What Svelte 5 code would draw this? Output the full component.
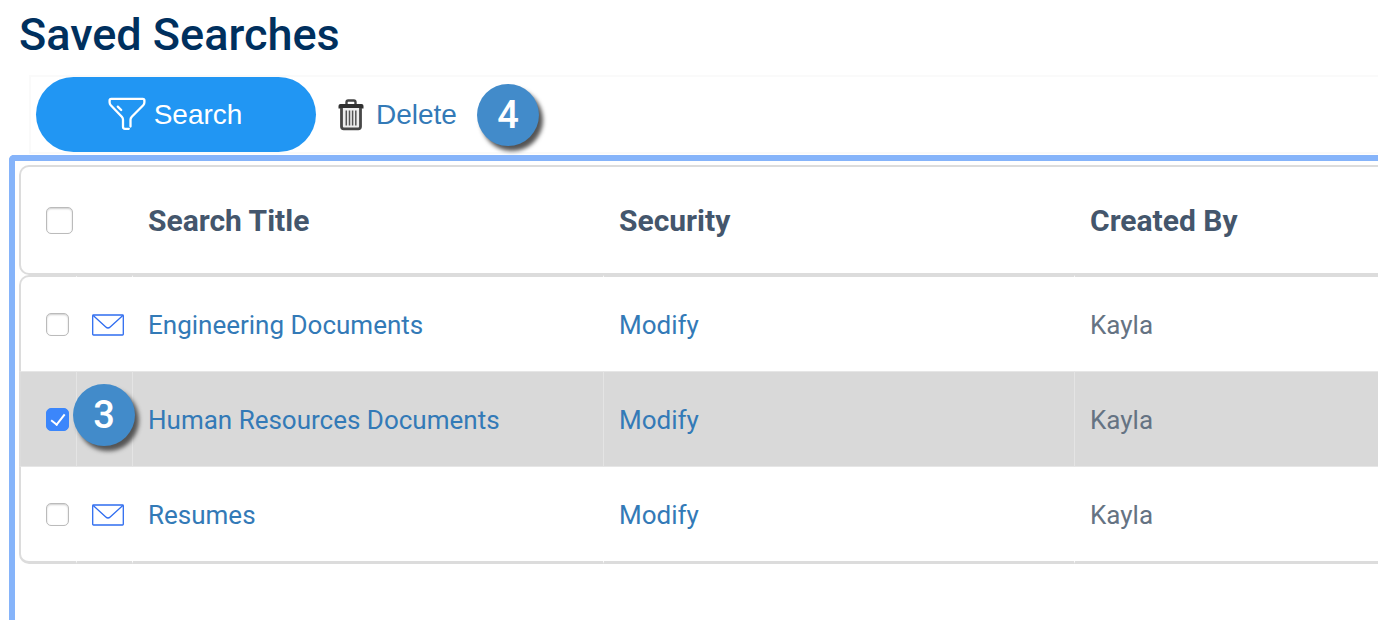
<script lang="ts">
  interface SavedSearch {
    id: number;
    title: string;
    createdBy: string;
    selected: boolean;
    step?: number;
  }

  let searches = $state<SavedSearch[]>([
    { id: 1, title: "Engineering Documents", createdBy: "Kayla", selected: false },
    { id: 2, title: "Human Resources Documents", createdBy: "Kayla", selected: true, step: 3 },
    { id: 3, title: "Resumes", createdBy: "Kayla", selected: false },
  ]);

  let allSelected = $derived(searches.length > 0 && searches.every((s) => s.selected));

  function toggleAll(event: Event) {
    const checked = (event.target as HTMLInputElement).checked;
    for (const search of searches) search.selected = checked;
  }

  function deleteSelected() {
    searches = searches.filter((s) => !s.selected);
  }
</script>

<main>
  <h1>Saved Searches</h1>

  <div class="toolbar">
    <button class="search" type="button">
      <svg width="38" height="36" viewBox="0 0 38 36" fill="none" stroke="#fff" stroke-width="2.3" stroke-linecap="round" stroke-linejoin="round">
        <path d="M22.5 29.5V22.8C22.5 21.6 23 20.7 23.8 19.8L35.2 8.2C36 7.3 36.4 6.4 36.4 5.2V3.4C36.4 2.4 35.8 1.8 34.8 1.8H3.2C2.2 1.8 1.6 2.4 1.6 3.4V5.2C1.6 6.4 2 7.3 2.8 8.2L13.8 19.8C14.6 20.7 15 21.6 15 22.8V29.8C15 31.2 15.7 31.8 17 31.8H20.8" />
        <path d="M9.8 9.6L13.2 13" />
      </svg>
      <span>Search</span>
    </button>
    <button class="delete" type="button" onclick={deleteSelected}>
      <svg width="26" height="32" viewBox="0 0 26 32" fill="none">
        <path d="M8.5 5V3.2Q8.5 1.5 10.2 1.5H15.8Q17.5 1.5 17.5 3.2V5" stroke="#444" stroke-width="2.4" />
        <path d="M2.5 5H23.5Q25.5 5 25.5 7V9.5H.5V7Q.5 5 2.5 5Z" fill="#303030" />
        <path d="M3.5 9V27.5Q3.5 29.8 5.8 29.8H20.2Q22.5 29.8 22.5 27.5V9" fill="#eee" stroke="#484848" stroke-width="2.8" />
        <path d="M8.3 11.5V26.5M11.5 11.5V26.5M14.6 11.5V26.5M17.8 11.5V26.5" stroke="#555" stroke-width="1.5" />
      </svg>
      <span>Delete</span>
    </button>
    <span class="badge">4</span>
  </div>

  <section class="panel">
    <table>
      <colgroup>
        <col class="check-col" />
        <col class="mail-col" />
        <col />
        <col />
        <col />
      </colgroup>
      <thead>
        <tr>
          <th class="check">
            <input type="checkbox" aria-label="Select all" checked={allSelected} onchange={toggleAll} />
          </th>
          <th></th>
          <th>Search Title</th>
          <th>Security</th>
          <th>Created By</th>
        </tr>
      </thead>
      <tbody>
        {#each searches as search (search.id)}
          <tr class:selected={search.selected}>
            <td class="check">
              <input type="checkbox" aria-label={search.title} bind:checked={search.selected} />
            </td>
            <td class="mail">
              <svg width="32" height="22" viewBox="0 0 32 22" fill="none" stroke="#2f6df0" stroke-width="1.3" stroke-linejoin="round">
                <rect x=".7" y="1" width="30.6" height="20" rx=".8" />
                <path d="M1.2 1.5L13.8 13Q16 15 18.2 13L30.8 1.5" />
              </svg>
              {#if search.step}
                <span class="badge over">{search.step}</span>
              {/if}
            </td>
            <td><a href="#open">{search.title}</a></td>
            <td><a href="#modify">Modify</a></td>
            <td>{search.createdBy}</td>
          </tr>
        {/each}
      </tbody>
    </table>
  </section>
</main>

<style>
  :global(body) {
    background: #fff;
  }

  main {
    display: flex;
    flex-direction: column;
    min-height: 100vh;
    box-sizing: border-box;
    padding: 8px 0 0 9px;
    overflow: hidden;
    font-family: Roboto, sans-serif;
  }

  h1 {
    margin: 0 0 13px 10px;
    font-size: 45px;
    line-height: 54px;
    font-weight: 500;
    color: #00305e;
  }

  .toolbar {
    display: flex;
    align-items: center;
    margin: 0 0 1px 20px;
    padding-left: 5px;
    border: 2px solid #fafafa;
    border-right: 0;
  }

  button {
    display: flex;
    align-items: center;
    border: 0;
    padding: 0;
    font-family: "Liberation Sans", Arial, sans-serif;
    font-size: 28px;
    line-height: 32px;
    cursor: pointer;
  }

  .search {
    justify-content: center;
    gap: 8px;
    width: 280px;
    height: 75px;
    padding-right: 2px;
    border-radius: 38px;
    background: #2196f3;
    color: #fff;
  }

  .delete {
    gap: 12px;
    margin: 0 20px 0 22px;
    background: none;
    color: #337ab7;
  }

  .badge {
    width: 62px;
    height: 62px;
    border-radius: 50%;
    background: #428bca;
    box-shadow: 4px 5px 4px #555;
    color: #fff;
    font-size: 38px;
    line-height: 62px;
    font-weight: 500;
    text-align: center;
  }

  .badge.over {
    position: absolute;
    top: 12px;
    left: -4px;
    z-index: 1;
  }

  .panel {
    flex: 1;
    padding: 4px 0 0 4px;
    border: solid #86b4fa;
    border-width: 6px 0 0 6px;
    border-top-left-radius: 5px;
    overflow: hidden;
  }

  /* wider than the panel, the last column runs off the right side */
  table {
    width: calc(100% + 168px);
    table-layout: fixed;
    border-collapse: separate;
    border-spacing: 0;
  }

  .check-col {
    width: 58px;
  }

  .mail-col {
    width: 56px;
  }

  th,
  td {
    box-sizing: border-box;
    height: 96px;
    padding: 2px 0 0 15px;
    border: 0 solid #dcdcdc;
    text-align: left;
    vertical-align: middle;
  }

  th {
    height: 110px;
    padding-top: 0;
    border-width: 2px 0;
    font-size: 30px;
    font-weight: 700;
    color: #44566c;
  }

  td {
    border-right: 1px solid rgba(255, 255, 255, 0.3);
    font-size: 26px;
    color: #657383;
  }

  .check {
    padding-top: 0;
    padding-left: 25px;
    border-left: 2px solid #dcdcdc;
  }

  th.check {
    border-radius: 10px 0 0 10px;
  }

  tbody tr:first-child td {
    border-top: 2px solid #dcdcdc;
  }

  tbody tr:first-child .check {
    border-top-left-radius: 10px;
  }

  tbody tr:last-child td {
    height: 97px;
    border-bottom: 3px solid #dcdcdc;
  }

  tbody tr:last-child .check {
    border-bottom-left-radius: 10px;
  }

  .selected td {
    border-top: 1px solid #e6e6e6;
    border-bottom: 1px solid #e6e6e6;
    background: #d9d9d9;
  }

  .mail {
    position: relative;
  }

  .mail svg {
    display: block;
  }

  .selected .mail svg {
    visibility: hidden;
  }

  a {
    color: #337ab7;
    text-decoration: none;
  }

  input {
    display: block;
    appearance: none;
    box-sizing: border-box;
    width: 23px;
    height: 23px;
    margin: 0;
    border: 1px solid #bbb;
    border-radius: 5px;
    background: #fff;
    box-shadow: inset 0 1px 2px rgba(0, 0, 0, 0.2);
  }

  th input {
    width: 27px;
    height: 27px;
  }

  input:checked {
    border-color: #3b86fb;
    background: #3b86fb;
    box-shadow: none;
  }

  input:checked::after {
    content: "";
    display: block;
    box-sizing: border-box;
    width: 8px;
    height: 14px;
    margin: 2px 0 0 7px;
    border: solid #fff;
    border-width: 0 2px 2px 0;
    transform: rotate(38deg);
  }
</style>
